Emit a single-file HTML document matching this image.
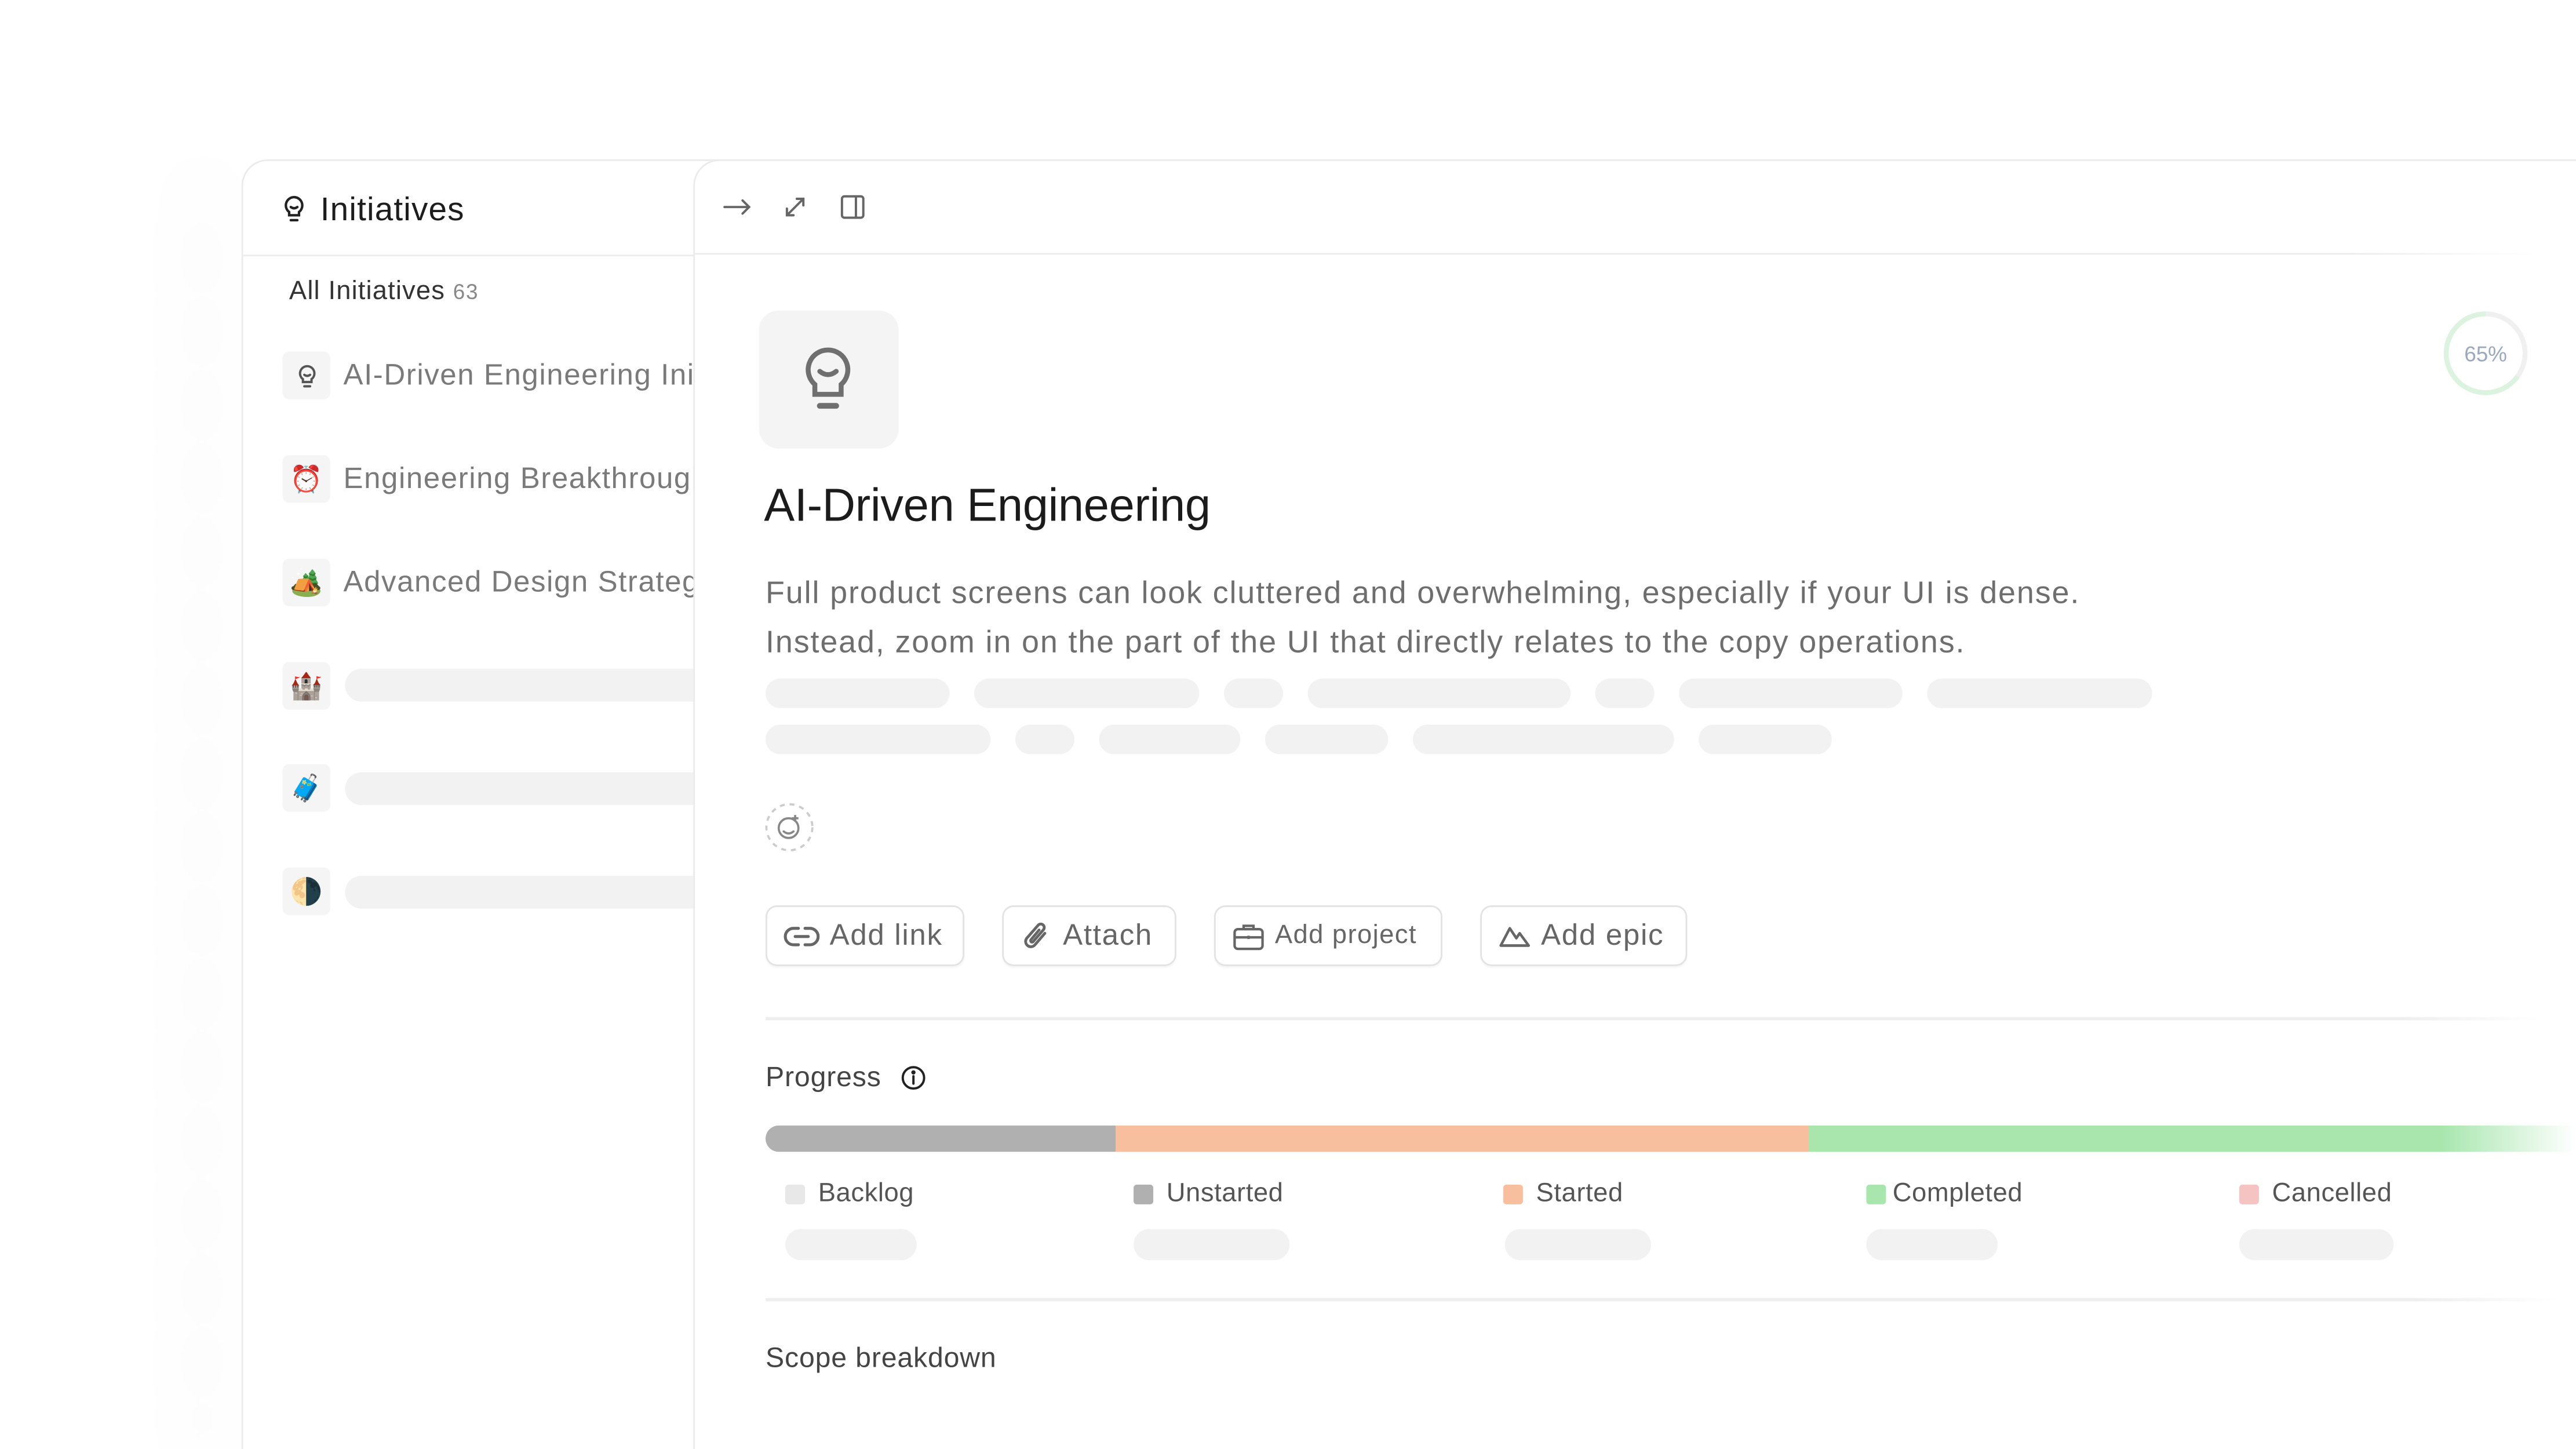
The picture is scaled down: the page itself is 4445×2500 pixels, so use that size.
<!DOCTYPE html>
<html><head><meta charset="utf-8"><style>
html,body{margin:0;padding:0;background:#fff;overflow:hidden}
body{width:4445px;height:2500px;position:relative}
#s{position:absolute;left:0;top:0;width:1568px;height:882px;transform:scale(2.83482);transform-origin:0 0;font-family:"Liberation Sans",sans-serif;overflow:hidden;background:#fff}
.a{position:absolute}
.sk{position:absolute;background:#f2f2f2;border-radius:10px}
.ib{position:absolute;left:172px;width:29px;height:29px;background:#f5f5f5;border-radius:4px;display:flex;align-items:center;justify-content:center;font-size:16px}
.it{position:absolute;left:209px;font-size:18px;color:#7a7a7a;white-space:nowrap;line-height:20px;letter-spacing:.55px}
.btn{position:absolute;top:551px;height:37px;border:1px solid #e3e3e3;border-radius:7px;display:flex;align-items:center;gap:6px;padding:0 10px;box-sizing:border-box;color:#666;font-size:18px;letter-spacing:.6px;box-shadow:0 1px 1px rgba(0,0,0,.04)}
.lg{position:absolute;top:718px;font-size:16px;color:#555;display:flex;align-items:center;gap:8px;line-height:18px;letter-spacing:.2px}
.lg i{display:block;width:12px;height:12px;border-radius:2px}
</style></head><body><div id="s">
<div class="a" style="left:148px;top:98px;width:10px;height:800px;box-shadow:-30px 0 60px rgba(0,0,0,.05);border-radius:16px 0 0 0"></div>
<!-- sidebar -->
<div class="a" style="left:147px;top:97px;width:300px;height:800px;background:#fff;border:1px solid #ebebeb;border-radius:16px 0 0 0"></div>
<div class="a" style="left:148px;top:155px;width:276px;height:1px;background:#ececec"></div>
<svg class="a" style="left:171px;top:118px" width="16" height="18" viewBox="0 0 16 18" fill="none" stroke="#222" stroke-width="1.5" stroke-linecap="round"><path d="M8 2a5 5 0 0 0-3 9v2h6v-2a5 5 0 0 0-3-9z"/><path d="M6 8q2 1.5 4 0M6 16h4"/></svg>
<div class="a" style="left:195px;top:116px;font-size:20px;color:#1d1d1d;line-height:24px;letter-spacing:.4px">Initiatives</div>
<div class="a" style="left:176px;top:169px;font-size:16px;color:#333;line-height:18px;letter-spacing:.4px">All Initiatives <span style="font-size:13px;color:#888;letter-spacing:.6px">63</span></div>
<div class="ib" style="top:214px"><svg width="14" height="16" viewBox="0 0 16 18" fill="none" stroke="#555" stroke-width="1.6" stroke-linecap="round"><path d="M8 2a5 5 0 0 0-3 9v2h6v-2a5 5 0 0 0-3-9z"/><path d="M6 8q2 1.5 4 0M6 16h4"/></svg></div>
<div class="it" style="top:218px">AI-Driven Engineering Initiative</div>
<div class="ib" style="top:277px">⏰</div>
<div class="it" style="top:281px">Engineering Breakthroughs</div>
<div class="ib" style="top:340px">🏕️</div>
<div class="it" style="top:344px">Advanced Design Strategy</div>
<div class="ib" style="top:403px">🏰</div><div class="sk" style="left:210px;top:407px;width:240px;height:20px"></div>
<div class="ib" style="top:465px">🧳</div><div class="sk" style="left:210px;top:470px;width:240px;height:20px"></div>
<div class="ib" style="top:528px">🌗</div><div class="sk" style="left:210px;top:533px;width:240px;height:20px"></div>
<!-- main -->
<div class="a" style="left:422px;top:97px;width:1200px;height:800px;background:#fff;border:1px solid #ebebeb;border-radius:16px 0 0 0"></div>
<div class="a" style="left:423px;top:154px;width:1120px;height:1px;background:linear-gradient(90deg,#ececec 90%,rgba(236,236,236,0))"></div>
<svg class="a" style="left:440px;top:118px" width="18" height="16" viewBox="0 0 18 16" fill="none" stroke="#666" stroke-width="1.4" stroke-linecap="round"><path d="M1 8h15M12 4l4 4-4 4"/></svg>
<svg class="a" style="left:476px;top:118px" width="16" height="16" viewBox="0 0 16 16" fill="none" stroke="#666" stroke-width="1.4" stroke-linecap="round"><path d="M3 13L13 3M9 3h4v4M3 9v4h4"/></svg>
<svg class="a" style="left:511px;top:118px" width="16" height="16" viewBox="0 0 16 16" fill="none" stroke="#666" stroke-width="1.4"><rect x="1.5" y="1.5" width="13" height="13" rx="1.5"/><path d="M10 1.5v13"/></svg>
<div class="a" style="left:462px;top:189px;width:85px;height:84px;background:#f4f4f4;border-radius:12px"></div>
<svg class="a" style="left:488px;top:210px" width="32" height="42" viewBox="0 0 32 42" fill="none" stroke="#6f6f6f" stroke-width="3" stroke-linecap="round"><path d="M16 3a12 12 0 0 0-8 21v6h16v-6a12 12 0 0 0-8-21z"/><path d="M11 16q5 4 10 0"/><path d="M11 37h10" stroke-width="3.5"/></svg>
<div class="a" style="left:465px;top:291px;font-size:28px;color:#1b1b1b;line-height:34px;letter-spacing:-.1px">AI-Driven Engineering</div>
<div class="a" style="left:466px;top:347px;font-size:19px;color:#6e6e6e;line-height:30px;white-space:nowrap;letter-spacing:.66px">Full product screens can look cluttered and overwhelming, especially if your UI is dense.<br>Instead, zoom in on the part of the UI that directly relates to the copy operations.</div>
<div class="sk" style="left:466px;top:413px;width:112px;height:18px"></div>
<div class="sk" style="left:593px;top:413px;width:137px;height:18px"></div>
<div class="sk" style="left:745px;top:413px;width:36px;height:18px"></div>
<div class="sk" style="left:796px;top:413px;width:160px;height:18px"></div>
<div class="sk" style="left:971px;top:413px;width:36px;height:18px"></div>
<div class="sk" style="left:1022px;top:413px;width:136px;height:18px"></div>
<div class="sk" style="left:1173px;top:413px;width:137px;height:18px"></div>
<div class="sk" style="left:466px;top:441px;width:137px;height:18px"></div>
<div class="sk" style="left:618px;top:441px;width:36px;height:18px"></div>
<div class="sk" style="left:669px;top:441px;width:86px;height:18px"></div>
<div class="sk" style="left:770px;top:441px;width:75px;height:18px"></div>
<div class="sk" style="left:860px;top:441px;width:159px;height:18px"></div>
<div class="sk" style="left:1034px;top:441px;width:81px;height:18px"></div>
<svg class="a" style="left:465px;top:488px" width="31" height="31" viewBox="0 0 31 31" fill="none" stroke="#888" stroke-width="1.3"><circle cx="15.5" cy="15.5" r="14" stroke="#ccc" stroke-dasharray="3 3"/><circle cx="15" cy="16" r="6"/><path d="M12 18q3 2.5 6 0" stroke-linecap="round"/><path d="M19 8v4M17 10h4"/></svg>
<div class="btn" style="left:466px;width:121px"><svg width="22" height="14" viewBox="0 0 22 14" fill="none" stroke="#666" stroke-width="1.8" stroke-linecap="round"><path d="M9 2H6a5 5 0 0 0 0 10h3M13 2h3a5 5 0 0 1 0 10h-3M7 7h8"/></svg>Add link</div>
<div class="btn" style="left:610px;width:106px"><svg width="20" height="20" viewBox="0 0 20 20" fill="none" stroke="#666" stroke-width="1.7" stroke-linecap="round"><path d="M15 8l-6 7a3 3 0 0 1-5-4l7-8a2 2 0 0 1 3 3l-6 7a.8.8 0 0 1-1.5-1l5-6"/></svg>Attach</div>
<div class="btn" style="left:739px;width:139px;font-size:16px;letter-spacing:.5px"><svg width="20" height="18" viewBox="0 0 20 18" fill="none" stroke="#666" stroke-width="1.5"><rect x="1.5" y="4.5" width="17" height="12" rx="2"/><path d="M7 4.5V2.5h6v2M1.5 9.5h17M10 8.5v2"/></svg>Add project</div>
<div class="btn" style="left:901px;width:126px"><svg width="20" height="14" viewBox="0 0 20 14" fill="none" stroke="#666" stroke-width="1.6" stroke-linejoin="round"><path d="M1.5 12.5L7 2l4 6 2-3 5.5 7.5z"/></svg>Add epic</div>
<div class="a" style="left:466px;top:619px;width:1080px;height:2px;background:linear-gradient(90deg,#eee 92%,rgba(238,238,238,0))"></div>
<div class="a" style="left:466px;top:646px;font-size:17px;color:#444;line-height:20px;letter-spacing:.3px">Progress</div>
<svg class="a" style="left:548px;top:648px" width="16" height="16" viewBox="0 0 16 16" fill="none" stroke="#222" stroke-width="1.4"><circle cx="8" cy="8" r="6.5"/><path d="M8 7v4.5" stroke-linecap="round"/><circle cx="8" cy="4.7" r=".6" fill="#222"/></svg>
<div class="a" style="left:466px;top:685px;width:1102px;height:16px;border-radius:8px 0 0 8px;background:linear-gradient(90deg,#b0b0b0 0,#b0b0b0 213px,#f8bf9e 213px,#f8bf9e 635px,#a8e6ae 635px,#a8e6ae 1020px,rgba(168,230,174,0) 1102px)"></div>
<div class="lg" style="left:478px"><i style="background:#e8e8e8"></i>Backlog</div>
<div class="lg" style="left:690px"><i style="background:#b0b0b0"></i>Unstarted</div>
<div class="lg" style="left:915px"><i style="background:#f8bf9e"></i>Started</div>
<div class="lg" style="left:1136px;gap:4px"><i style="background:#a8e6ae"></i>Completed</div>
<div class="lg" style="left:1363px"><i style="background:#f6c3c3"></i>Cancelled</div>
<div class="sk" style="left:478px;top:748px;width:80px;height:19px"></div>
<div class="sk" style="left:690px;top:748px;width:95px;height:19px"></div>
<div class="sk" style="left:916px;top:748px;width:89px;height:19px"></div>
<div class="sk" style="left:1136px;top:748px;width:80px;height:19px"></div>
<div class="sk" style="left:1363px;top:748px;width:94px;height:19px"></div>
<div class="a" style="left:466px;top:790px;width:1090px;height:2px;background:linear-gradient(90deg,#eee 92%,rgba(238,238,238,0))"></div>
<div class="a" style="left:466px;top:817px;font-size:17px;color:#444;line-height:20px;letter-spacing:.3px">Scope breakdown</div>
<svg class="a" style="left:1486px;top:188px" width="54" height="54" viewBox="0 0 54 54" fill="none" stroke-width="3"><circle cx="27" cy="27" r="24" stroke="#f0f0f0"/><circle cx="27" cy="27" r="24" stroke="#dcf3df" stroke-dasharray="98 200" transform="rotate(-90 27 27) scale(1 -1) translate(0 -54)"/><text x="27" y="32" text-anchor="middle" font-family="Liberation Sans,sans-serif" font-size="13" fill="#9aa9bf" stroke="none">65%</text></svg>
</div></body></html>
